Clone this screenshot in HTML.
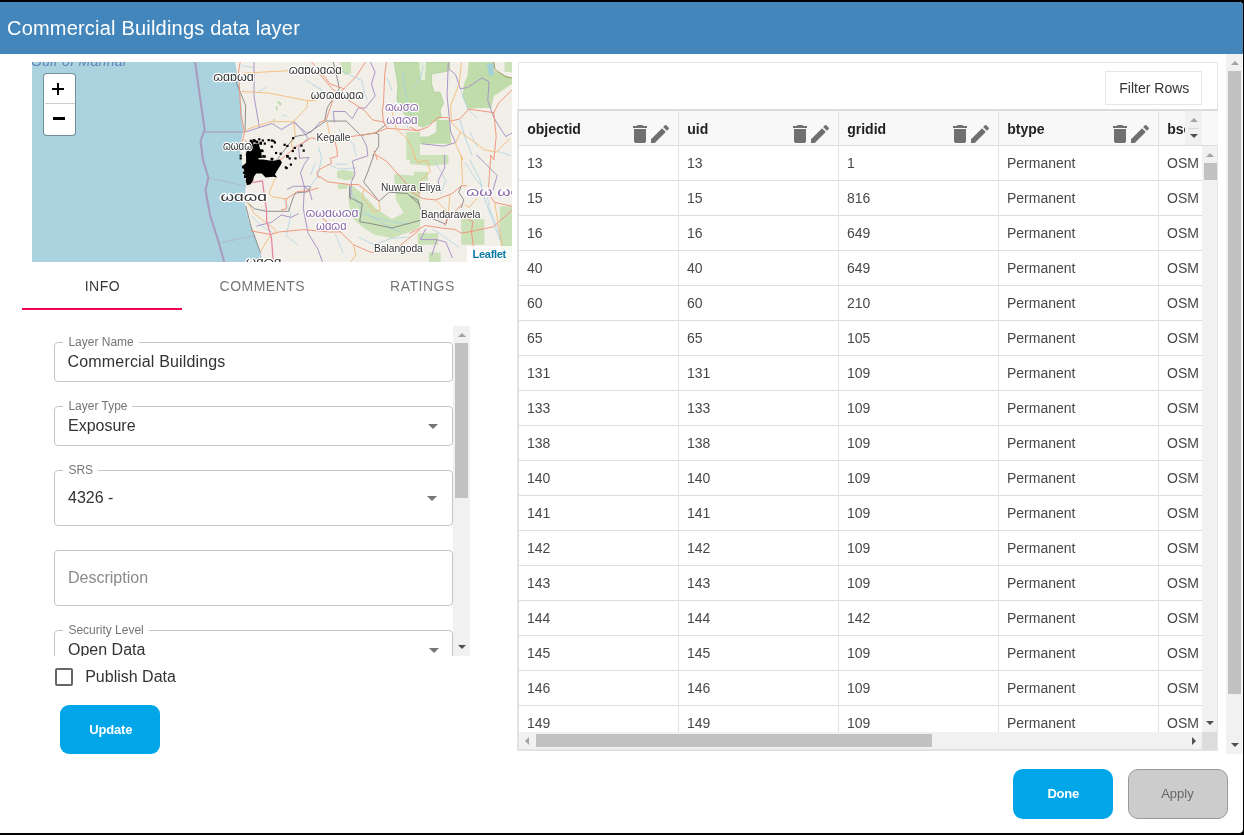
<!DOCTYPE html>
<html><head><meta charset="utf-8"><style>
*{box-sizing:border-box;margin:0;padding:0}
html,body{width:1244px;height:835px;overflow:hidden;background:#000;font-family:"Liberation Sans",sans-serif}
#dlg{position:absolute;left:0;top:2px;width:1243px;height:831px;background:#fff;border-radius:0 4px 4px 0;overflow:hidden}
#c{position:absolute;left:0;top:-2px;width:1243px;height:835px;will-change:transform}
#hdr{position:absolute;left:0;top:2px;width:1243px;height:52px;background:#4386bb;border-radius:0 4px 0 0}
#map{position:absolute;left:32px;top:62px;width:480px;height:200px;background:#aad3df;overflow:hidden}
.r{position:absolute}
.t{position:absolute;line-height:1;white-space:nowrap}
.ic{position:absolute}
.fld{position:absolute;left:54px;width:399px;border:1px solid #c4c4c4;border-radius:4px}
.arr{position:absolute;width:0;height:0;border-left:5px solid transparent;border-right:5px solid transparent;border-top:5px solid #757575}
.up{position:absolute;width:0;height:0;border-left:4px solid transparent;border-right:4px solid transparent;border-bottom:4px solid #a3a3a3}
.dn{position:absolute;width:0;height:0;border-left:4px solid transparent;border-right:4px solid transparent;border-top:4px solid #505050}
.lt{position:absolute;width:0;height:0;border-top:4px solid transparent;border-bottom:4px solid transparent;border-right:4px solid #a3a3a3}
.rt{position:absolute;width:0;height:0;border-top:4px solid transparent;border-bottom:4px solid transparent;border-left:4px solid #505050}
</style></head><body><div id="dlg"><div id="c">
<div id="hdr"></div>
<div class="t" style="left:7px;top:17.87px;font-size:20px;color:#fff;font-weight:normal;letter-spacing:.2px">Commercial Buildings data layer</div>
<div id="map"><svg width="480" height="200" viewBox="32 62 480 200" style="position:absolute;left:0;top:0;font-family:'Liberation Sans',sans-serif"><polygon points="235,61 238,80 241.5,105 243,131 240,150 243,170 246,185 244,200 248.3,219.8 255.6,239.4 261.1,255.2 263.6,263 513,263 513,61" fill="#f2efe9" /><polygon points="340.4,62 351.1,62 351.1,73.2 345,75 340.4,70" fill="#cbe1b8" /><polygon points="394,62 449.5,62 449.5,69.6 446.7,71.3 431.6,74 431.6,84 434,92.2 440,92.3 443.5,103.1 440,110.3 441.1,117.5 423.2,127.1 410,122 402,110 397,100 398,85 396,73" fill="#c0dcab" stroke="#a8d095" stroke-width="0.8"/><polygon points="419,62 426,62 425,80 421,80" fill="#e6efdc" /><polygon points="436.3,119.9 449.5,119.9 451.3,143.8 417.2,143.8 414.8,136.6 428,136.6 436.3,131.9" fill="#c0dcab" /><polygon points="406.2,131.9 420,131.9 420,160 406.2,160" fill="#cbe1b8" /><polygon points="468.7,62 493.8,62 493.8,70.8 512,78 512,84 493.8,95.9 491.4,107.9 477,107.9 467.5,109.1 462.7,95.9 463.9,84 467.5,75.6" fill="#c0dcab" /><polygon points="486.6,63.6 493.8,63.6 493.8,75.6 489,75.6" fill="#a6d1d6" /><polygon points="504.6,62 512,62 512,72 504.6,72" fill="#cbe1b8" /><polygon points="410,155 448.5,155 448.5,164 430,166 410,164" fill="#cbe1b8" /><polygon points="413.8,171.7 428,171.7 428,180.6 413.8,180.6" fill="#cbe1b8" /><polygon points="350.8,184.5 362.3,193.5 376.4,208.8 391.8,219.1 409.7,210.1 420,203.7 420,226.8 409.7,231.9 391.8,238.3 373.8,234.5 362.3,226.8 350.8,216.5 348.2,197.3" fill="#cbe1b8" /><polygon points="394,174 420,176 420,219 405,215 396,200" fill="#cbe1b8" /><polygon points="337,171 345,169.8 354.2,172 354.2,179.4 345,180 337,178" fill="#cbe1b8" /><polygon points="337.9,184.2 347.5,184.2 347.5,189 337.9,189" fill="#cbe1b8" /><polygon points="410,197.3 417.7,197.3 417.7,223 410,223" fill="#cbe1b8" /><polygon points="417.7,233.2 438.2,233.2 438.2,244.7 417.7,244.7" fill="#cbe1b8" /><polygon points="461.3,219.1 484.4,219.1 484.4,244.7 461.3,244.7" fill="#cbe1b8" /><polygon points="499.7,206.3 512,206.3 512,263 502,263 499.7,230" fill="#cbe1b8" /><polygon points="429,252.4 440.8,252.4 440.8,263 429,263" fill="#cbe1b8" /><polygon points="277,101.5 279,101 282,104 280.5,106 278.5,104" fill="#bfdcab" /><polygon points="275.5,106.5 277.5,106 277.5,111 276,110" fill="#bfdcab" /><polygon points="273,119 276,118.5 275,121 272.5,121" fill="#cde3bb" /><polyline points="313,85 322,90 330,95" fill="none" stroke="#a6d0e2" stroke-width="0.8" stroke-linejoin="round" stroke-linecap="round" /><polyline points="318.7,147.8 321.6,157.4 317.8,176.5 309.2,187" fill="none" stroke="#a6d0e2" stroke-width="0.8" stroke-linejoin="round" stroke-linecap="round" /><polyline points="336,164.1 347.5,164.1" fill="none" stroke="#a6d0e2" stroke-width="0.8" stroke-linejoin="round" stroke-linecap="round" /><polyline points="403,72 405,90 410,112 418,124" fill="none" stroke="#a6d0e2" stroke-width="0.8" stroke-linejoin="round" stroke-linecap="round" /><polyline points="460,120 466,140 472,155" fill="none" stroke="#a6d0e2" stroke-width="0.8" stroke-linejoin="round" stroke-linecap="round" /><polyline points="350,190 362,210 380,222 400,232" fill="none" stroke="#a6d0e2" stroke-width="0.8" stroke-linejoin="round" stroke-linecap="round" /><polyline points="470,160 480,180 485,200 500,240" fill="none" stroke="#a6d0e2" stroke-width="0.8" stroke-linejoin="round" stroke-linecap="round" /><polyline points="242,66 254,67.2" fill="none" stroke="#a6d0e2" stroke-width="0.7" stroke-linejoin="round" stroke-linecap="round" /><polyline points="306.6,80.4 313.8,85.1" fill="none" stroke="#a6d0e2" stroke-width="0.7" stroke-linejoin="round" stroke-linecap="round" /><polyline points="266,87.5 258.7,91.7" fill="none" stroke="#a6d0e2" stroke-width="0.7" stroke-linejoin="round" stroke-linecap="round" /><polyline points="282.7,115 286.3,116.3" fill="none" stroke="#a6d0e2" stroke-width="0.7" stroke-linejoin="round" stroke-linecap="round" /><polyline points="341.6,70.8 351.1,75.6 361.9,80.4 364.3,93.5 367.9,99.5" fill="none" stroke="#a6d0e2" stroke-width="0.7" stroke-linejoin="round" stroke-linecap="round" /><polyline points="387.1,78 391.9,90" fill="none" stroke="#a6d0e2" stroke-width="0.7" stroke-linejoin="round" stroke-linecap="round" /><polyline points="339.2,129.5 344,136.6 353.5,143.8 355.9,155.8" fill="none" stroke="#a6d0e2" stroke-width="0.7" stroke-linejoin="round" stroke-linecap="round" /><polyline points="403.8,117.5 408.6,129.5" fill="none" stroke="#a6d0e2" stroke-width="0.7" stroke-linejoin="round" stroke-linecap="round" /><polyline points="413.6,88.7 420.8,76.8 423.2,66" fill="none" stroke="#a6d0e2" stroke-width="0.7" stroke-linejoin="round" stroke-linecap="round" /><polyline points="460.3,88.7 463.9,99.5 468.7,110.3 477,117.5" fill="none" stroke="#a6d0e2" stroke-width="0.7" stroke-linejoin="round" stroke-linecap="round" /><polyline points="469.9,131.9 477,146.2" fill="none" stroke="#a6d0e2" stroke-width="0.7" stroke-linejoin="round" stroke-linecap="round" /><polyline points="497.4,151 510.6,155.8" fill="none" stroke="#a6d0e2" stroke-width="0.7" stroke-linejoin="round" stroke-linecap="round" /><polyline points="465.1,162.7 476.7,180.6 481.8,185.8" fill="none" stroke="#a6d0e2" stroke-width="0.7" stroke-linejoin="round" stroke-linecap="round" /><polyline points="486.9,193.5 489.5,208.8 497.2,226.8 502.3,244.7" fill="none" stroke="#a6d0e2" stroke-width="0.7" stroke-linejoin="round" stroke-linecap="round" /><polyline points="435.6,162.7 445.9,180.6 440.8,193.5" fill="none" stroke="#a6d0e2" stroke-width="0.7" stroke-linejoin="round" stroke-linecap="round" /><polyline points="433,229.4 448.5,239.6 458.7,247.3" fill="none" stroke="#a6d0e2" stroke-width="0.7" stroke-linejoin="round" stroke-linecap="round" /><polyline points="327.7,164 339.2,169.1 355.9,167.8" fill="none" stroke="#a6d0e2" stroke-width="0.7" stroke-linejoin="round" stroke-linecap="round" /><polyline points="353.3,211.4 371.3,216.5 391.8,221.7 409.7,224.2" fill="none" stroke="#a6d0e2" stroke-width="0.7" stroke-linejoin="round" stroke-linecap="round" /><polyline points="335.4,234.5 343.1,252.4" fill="none" stroke="#a6d0e2" stroke-width="0.7" stroke-linejoin="round" stroke-linecap="round" /><polyline points="358.5,237.1 373.8,244.7 391.8,238.3 409.7,237.1" fill="none" stroke="#a6d0e2" stroke-width="0.7" stroke-linejoin="round" stroke-linecap="round" /><polyline points="252,216.2 261.7,226 274,233.3" fill="none" stroke="#a6d0e2" stroke-width="0.7" stroke-linejoin="round" stroke-linecap="round" /><polyline points="283.7,199 291,213.7 286.2,235.7 298.4,245.5" fill="none" stroke="#a6d0e2" stroke-width="0.7" stroke-linejoin="round" stroke-linecap="round" /><polyline points="310.6,174.7 315.5,162.4" fill="none" stroke="#a6d0e2" stroke-width="0.7" stroke-linejoin="round" stroke-linecap="round" /><polyline points="195,61 199,90 204.7,130 200.5,141 203,160 208.4,177.8 205.5,190 210,215 218,240 224.5,263" fill="none" stroke="#a89bbb" stroke-width="2" stroke-linejoin="round" stroke-linecap="round" /><polyline points="204,132 244,132" fill="none" stroke="#a89bbb" stroke-width="1.2" stroke-linejoin="round" stroke-linecap="round" /><polyline points="209,178 245,186" fill="none" stroke="#b3a9c4" stroke-width="0.8" stroke-linejoin="round" stroke-linecap="round" stroke-dasharray="3 2"/><polyline points="218,243 255,236" fill="none" stroke="#b3a9c4" stroke-width="0.8" stroke-linejoin="round" stroke-linecap="round" stroke-dasharray="3 2"/><polyline points="254,62 254,96 259.3,127" fill="none" stroke="#ab95c6" stroke-width="1.0" stroke-linejoin="round" stroke-linecap="round" /><polyline points="245.6,131.9 271.9,123.5 281.5,129.5 293.5,122.3 306.6,133 311.4,131.9 320,122.3" fill="none" stroke="#ab95c6" stroke-width="1.0" stroke-linejoin="round" stroke-linecap="round" /><polyline points="294.8,121.9 304.4,133.4 308.2,138.2 298.6,147.8 299.6,158.3 309.2,157.4 304.4,164.1 300.5,172.7 304.4,187 309.2,189.9 312,200" fill="none" stroke="#ab95c6" stroke-width="1.0" stroke-linejoin="round" stroke-linecap="round" /><polyline points="304.4,187 303.3,208.8 308.1,233.3 317.9,249.1 322.8,263" fill="none" stroke="#ab95c6" stroke-width="1.0" stroke-linejoin="round" stroke-linecap="round" /><polyline points="287.4,189.3 293.5,186.3 309.4,186.3" fill="none" stroke="#ab95c6" stroke-width="1.0" stroke-linejoin="round" stroke-linecap="round" /><polyline points="256.9,225.9 271.5,222.3 281.3,214.9 291,217.4 298.4,213.7" fill="none" stroke="#ab95c6" stroke-width="1.0" stroke-linejoin="round" stroke-linecap="round" /><polyline points="370.3,62 375.1,72 371.5,84 375.1,95.9 365.5,107.9 358.3,107.9 352.3,118.7 345.1,111.5 333.2,111.5 334.4,122.3" fill="none" stroke="#ab95c6" stroke-width="1.0" stroke-linejoin="round" stroke-linecap="round" /><polyline points="361.9,136.6 366.7,146.2 367.9,155.8 360,158.3 352.3,161.2 355.1,173.6 351.3,182.3 350.3,200" fill="none" stroke="#ab95c6" stroke-width="1.0" stroke-linejoin="round" stroke-linecap="round" /><polyline points="448.3,62 447.1,95.9 450.7,131.9 455.5,142.6 443.5,146.2 422,143.8" fill="none" stroke="#ab95c6" stroke-width="1.0" stroke-linejoin="round" stroke-linecap="round" /><polyline points="449.5,69.6 455.5,74.4 460.3,88.7 467.5,87.5 481.9,78 489,81.6 487.8,100.7 493.8,117.5 501,129.5 505.8,136.6 512,133" fill="none" stroke="#ab95c6" stroke-width="1.0" stroke-linejoin="round" stroke-linecap="round" /><polyline points="444.6,155 444.6,167.8 438.2,180.6 439.5,190.9" fill="none" stroke="#ab95c6" stroke-width="1.0" stroke-linejoin="round" stroke-linecap="round" /><polyline points="476.7,155 486.9,165.3 497.2,175.5 492,193.5" fill="none" stroke="#ab95c6" stroke-width="1.0" stroke-linejoin="round" stroke-linecap="round" /><polyline points="425.4,229.4 420.3,239.6 436.9,239.6 431.8,255" fill="none" stroke="#ab95c6" stroke-width="1.0" stroke-linejoin="round" stroke-linecap="round" /><polyline points="436.9,239.6 445.9,242.2 452.3,257.6" fill="none" stroke="#ab95c6" stroke-width="1.0" stroke-linejoin="round" stroke-linecap="round" /><polyline points="493.8,62 495,69.6 505.8,76.8 512,78" fill="none" stroke="#a39a5a" stroke-width="1" stroke-linejoin="round" stroke-linecap="round" /><polyline points="236,81.6 245.6,105.5 245,131.9" fill="none" stroke="#858585" stroke-width="0.9" stroke-linejoin="round" stroke-linecap="round" /><polyline points="276.7,160 294.7,136.6 306.6,134.3 325.8,121 346.3,121.1 360.7,135.4 375.1,133 385.9,124.7" fill="none" stroke="#858585" stroke-width="0.9" stroke-linejoin="round" stroke-linecap="round" /><polyline points="333.2,62 338,81.6 339.2,88.7 327.2,107.9 324.8,119.9" fill="none" stroke="#858585" stroke-width="0.9" stroke-linejoin="round" stroke-linecap="round" /><polyline points="375.1,133 378.7,134.3 378.7,146.2 372.7,155.8 373.8,155 367.4,173 363.6,181.9 379,201.2 389.2,192.2 407.2,193.5 420,205" fill="none" stroke="#858585" stroke-width="0.9" stroke-linejoin="round" stroke-linecap="round" /><polyline points="349.5,185.8 349.5,197.3 362.3,203.7 359.7,221.7 373.8,224.2 391.8,228 420,220.4" fill="none" stroke="#858585" stroke-width="0.9" stroke-linejoin="round" stroke-linecap="round" /><polyline points="244.7,200.3 254.4,208.8 266.6,211.3 288.6,211.3 293.5,196.6 295.9,193 308.1,191.7 310.6,186.9" fill="none" stroke="#858585" stroke-width="0.9" stroke-linejoin="round" stroke-linecap="round" /><polyline points="245.9,206.4 250.8,225.9 260.5,252.8" fill="none" stroke="#858585" stroke-width="0.9" stroke-linejoin="round" stroke-linecap="round" /><polyline points="410,196 417.7,199.9 420.3,208.8 430.5,217.8 445.9,224.2 447.2,219.1" fill="none" stroke="#858585" stroke-width="0.9" stroke-linejoin="round" stroke-linecap="round" /><polyline points="461.3,185.8 458.7,192.2 463.8,199.9 461.3,207.6" fill="none" stroke="#858585" stroke-width="0.9" stroke-linejoin="round" stroke-linecap="round" /><polyline points="240.2,62 238.4,72 239.6,90 240.8,113.9 244.4,131.9 242,143.8" fill="none" stroke="#ef9479" stroke-width="0.95" stroke-linejoin="round" stroke-linecap="round" /><polyline points="311.4,62 321,72 330,84 343.9,88.7" fill="none" stroke="#ef9479" stroke-width="0.95" stroke-linejoin="round" stroke-linecap="round" /><polyline points="280.3,160 297,146.2 311.4,137.8 316.2,139 330,136.6 351.1,136.6 375.1,133 387.1,128.3 403.8,129.5 420,130.7" fill="none" stroke="#ef9479" stroke-width="0.95" stroke-linejoin="round" stroke-linecap="round" /><polyline points="365.5,62 355.9,76.8 343.9,88.7 333.2,99.5 326,119.9 320,122.3" fill="none" stroke="#ef9479" stroke-width="0.95" stroke-linejoin="round" stroke-linecap="round" /><polyline points="320,74.4 332,88.7 347.5,99.5 364.3,110.3 372.7,119.9 384.7,122.3" fill="none" stroke="#ef9479" stroke-width="0.95" stroke-linejoin="round" stroke-linecap="round" /><polyline points="386.5,62 384.7,74.4 383.5,103.1 382.3,110.3 383.5,122.3 387.1,128.3" fill="none" stroke="#ef9479" stroke-width="0.95" stroke-linejoin="round" stroke-linecap="round" /><polyline points="335,141.1 336.9,149.7 337.4,156.4 330.2,158.3 331.7,163.1 318.7,169.8 316.8,173.6 318.7,177.5 320,176.8" fill="none" stroke="#ef9479" stroke-width="0.95" stroke-linejoin="round" stroke-linecap="round" /><polyline points="373.9,151 377.5,160" fill="none" stroke="#ef9479" stroke-width="0.95" stroke-linejoin="round" stroke-linecap="round" /><polyline points="317.9,188.1 309.4,190.5 297.2,191.7 286.2,199 286.2,208.8 281.3,210" fill="none" stroke="#ef9479" stroke-width="0.95" stroke-linejoin="round" stroke-linecap="round" /><polyline points="250.8,230.8 270.3,234.5 278.8,232 303.3,229.6 330,232 340.5,231.9 320,216.5" fill="none" stroke="#ef9479" stroke-width="0.95" stroke-linejoin="round" stroke-linecap="round" /><polyline points="320,176.8 327.7,181.9 349.5,184.5 358.5,184.5 379,201.2" fill="none" stroke="#ef9479" stroke-width="0.95" stroke-linejoin="round" stroke-linecap="round" /><polyline points="376.4,155 386.7,161.4 396.9,173 407.2,184.5 420,193.5" fill="none" stroke="#ef9479" stroke-width="0.95" stroke-linejoin="round" stroke-linecap="round" /><polyline points="340.5,231.9 353.3,244.7 371.3,252.4 391.8,252.4 420,229.4" fill="none" stroke="#ef9479" stroke-width="0.95" stroke-linejoin="round" stroke-linecap="round" /><polyline points="410,127.1 417.2,130.7 428,127.1 437.5,117.5 447.1,117.5 451.3,121.1 460.3,118.7 468.7,109.1 477,110.3 493.8,112.7 498.6,103.1 512,89.9" fill="none" stroke="#ef9479" stroke-width="0.95" stroke-linejoin="round" stroke-linecap="round" /><polyline points="493.8,112.7 496.2,136.6 493.8,160 490.8,155 489.5,174.2 488.2,193.5 494.6,202.4 512,206.3" fill="none" stroke="#ef9479" stroke-width="0.95" stroke-linejoin="round" stroke-linecap="round" /><polyline points="410,190.9 422.8,198.6 435.6,199.9 452.3,193.5 461.3,185.8 466.4,185.8" fill="none" stroke="#ef9479" stroke-width="0.95" stroke-linejoin="round" stroke-linecap="round" /><polyline points="410,233.2 425.4,225.5 442.1,228.1 454.9,229.4 461.3,233.2 469,231.9 493.3,226.8 512,210.1" fill="none" stroke="#ef9479" stroke-width="0.95" stroke-linejoin="round" stroke-linecap="round" /><polyline points="462.6,203.7 447.2,219.1 444.6,225.5" fill="none" stroke="#ef9479" stroke-width="0.95" stroke-linejoin="round" stroke-linecap="round" /><polyline points="466.4,217.8 472.8,221.7 471.5,231.9 475.4,263" fill="none" stroke="#ef9479" stroke-width="0.95" stroke-linejoin="round" stroke-linecap="round" /><polyline points="245,140 258,160" fill="none" stroke="#ef9479" stroke-width="0.95" stroke-linejoin="round" stroke-linecap="round" /><polyline points="242,73.2 287.5,70.8" fill="none" stroke="#f3bb78" stroke-width="0.9" stroke-linejoin="round" stroke-linecap="round" /><polyline points="242,91.5 268.3,93 307.8,100.7 316.2,100.7" fill="none" stroke="#f3bb78" stroke-width="0.9" stroke-linejoin="round" stroke-linecap="round" /><polyline points="307.8,100.7 306.6,108 293.5,121.7 270.7,121.7 248,128.9 245,131.9" fill="none" stroke="#f3bb78" stroke-width="0.9" stroke-linejoin="round" stroke-linecap="round" /><polyline points="293.5,121.7 295.3,134.3 291.1,143.8 293.5,151" fill="none" stroke="#f3bb78" stroke-width="0.9" stroke-linejoin="round" stroke-linecap="round" /><polyline points="327.2,122.3 329.6,134.3" fill="none" stroke="#f3bb78" stroke-width="0.9" stroke-linejoin="round" stroke-linecap="round" /><polyline points="391.9,111.5 396.6,129.5 406.2,137.8 411,146.2 415.8,160" fill="none" stroke="#f3bb78" stroke-width="0.9" stroke-linejoin="round" stroke-linecap="round" /><polyline points="461.5,62 459.1,84 450.7,105.5 451.3,122.3 460.3,131.9 477,143.8 484.3,149.8 496.2,152.2 509.4,139" fill="none" stroke="#f3bb78" stroke-width="0.9" stroke-linejoin="round" stroke-linecap="round" /><polyline points="460.3,131.9 455.5,143.8 462.7,160 461.3,155 462.6,183.2" fill="none" stroke="#f3bb78" stroke-width="0.9" stroke-linejoin="round" stroke-linecap="round" /><polyline points="275.2,178.3 269,193 271.5,196.6 287.4,199" fill="none" stroke="#f3bb78" stroke-width="0.9" stroke-linejoin="round" stroke-linecap="round" /><polyline points="247.1,201.5 254.4,213.7 265.4,222.3 274,228.4 276.4,233.3" fill="none" stroke="#f3bb78" stroke-width="0.9" stroke-linejoin="round" stroke-linecap="round" /><polyline points="270.3,235.7 261.1,250.4" fill="none" stroke="#f3bb78" stroke-width="0.9" stroke-linejoin="round" stroke-linecap="round" /><polyline points="363.6,189.6 362.3,197.3 373.8,211.4 380.3,210.1 379,202.4" fill="none" stroke="#f3bb78" stroke-width="0.9" stroke-linejoin="round" stroke-linecap="round" /><polyline points="435.6,199.9 448.5,212.7 449.7,196" fill="none" stroke="#f3bb78" stroke-width="0.9" stroke-linejoin="round" stroke-linecap="round" /><polyline points="465.1,205 469,207.6 476.7,198.6" fill="none" stroke="#f3bb78" stroke-width="0.9" stroke-linejoin="round" stroke-linecap="round" /><polyline points="494.6,202.4 499.7,231.9 502.3,247.3" fill="none" stroke="#f3bb78" stroke-width="0.9" stroke-linejoin="round" stroke-linecap="round" /><polyline points="413.8,155 417.7,162.7 426.7,160.1 430.5,171.7 420.3,180.6" fill="none" stroke="#f3bb78" stroke-width="0.9" stroke-linejoin="round" stroke-linecap="round" /><polyline points="353.3,244.7 356,255 350,263" fill="none" stroke="#f3bb78" stroke-width="0.9" stroke-linejoin="round" stroke-linecap="round" /><polyline points="249,183 262.4,180.8 266.6,211.3 266.6,221 271.5,238.1 273.3,263" fill="none" stroke="#e3819a" stroke-width="1.2" stroke-linejoin="round" stroke-linecap="round" /><polygon points="246.9,150.2 251.6,149.5 257.8,153.3 258.6,159.6 263.2,159.6 269.5,160.4 273.4,161.1 279.6,159.6 281.9,161.9 281.1,164.2 277.2,170.5 274.9,174.4 277.2,177.5 273.4,176.7 265.6,177.5 261.7,173.6 256.2,173.6 253.9,176.7 253.1,180.6 250.8,183.7 246.9,185.3 245.7,180.6 246.1,176.7 243.8,169.7 243.0,165.8 246.1,162.7 246.1,153.3" fill="#000" /><polygon points="248,147 253,144.5 257,145.5 261,150 262,158 250,158" fill="#000" /><rect x="249.7" y="139.7" width="2.6" height="2.6" fill="#000"/><rect x="252.7" y="139.2" width="2.6" height="2.6" fill="#000"/><rect x="255.7" y="140.7" width="2.6" height="2.6" fill="#000"/><rect x="250.7" y="142.7" width="2.6" height="2.6" fill="#000"/><rect x="253.7" y="143.7" width="2.6" height="2.6" fill="#000"/><rect x="256.7" y="144.7" width="2.6" height="2.6" fill="#000"/><rect x="249.7" y="146.2" width="2.6" height="2.6" fill="#000"/><rect x="252.7" y="147.2" width="2.6" height="2.6" fill="#000"/><rect x="255.7" y="148.2" width="2.6" height="2.6" fill="#000"/><rect x="247.7" y="148.7" width="2.6" height="2.6" fill="#000"/><rect x="251.7" y="150.2" width="2.6" height="2.6" fill="#000"/><rect x="250.7" y="140.7" width="2.6" height="2.6" fill="#000"/><rect x="253.6" y="139.79999999999998" width="2.6" height="2.6" fill="#000"/><rect x="256.5" y="143.6" width="2.6" height="2.6" fill="#000"/><rect x="259.4" y="141.7" width="2.6" height="2.6" fill="#000"/><rect x="257.4" y="147.39999999999998" width="2.6" height="2.6" fill="#000"/><rect x="260.3" y="149.39999999999998" width="2.6" height="2.6" fill="#000"/><rect x="251.7" y="147.39999999999998" width="2.6" height="2.6" fill="#000"/><rect x="247.89999999999998" y="150.29999999999998" width="2.6" height="2.6" fill="#000"/><rect x="245.89999999999998" y="153.2" width="2.6" height="2.6" fill="#000"/><rect x="262.2" y="155.1" width="2.6" height="2.6" fill="#000"/><rect x="270.8" y="158.0" width="2.6" height="2.6" fill="#000"/><rect x="242.1" y="165.6" width="2.6" height="2.6" fill="#000"/><rect x="243.1" y="171.39999999999998" width="2.6" height="2.6" fill="#000"/><rect x="244.0" y="175.2" width="2.6" height="2.6" fill="#000"/><rect x="245.89999999999998" y="180.0" width="2.6" height="2.6" fill="#000"/><rect x="247.89999999999998" y="181.89999999999998" width="2.6" height="2.6" fill="#000"/><rect x="286.2" y="155.1" width="2.6" height="2.6" fill="#000"/><rect x="277.59999999999997" y="159.89999999999998" width="2.6" height="2.6" fill="#000"/><rect x="273.7" y="160.79999999999998" width="2.6" height="2.6" fill="#000"/><rect x="258.2" y="138.2" width="2.2" height="2.2" fill="#000"/><rect x="261.7" y="139.4" width="2.2" height="2.2" fill="#000"/><rect x="263.7" y="142.5" width="2.2" height="2.2" fill="#000"/><rect x="267.6" y="139.0" width="2.2" height="2.2" fill="#000"/><rect x="270.7" y="139.4" width="2.2" height="2.2" fill="#000"/><rect x="273.8" y="141.4" width="2.2" height="2.2" fill="#000"/><rect x="270.7" y="145.6" width="2.2" height="2.2" fill="#000"/><rect x="259.8" y="142.5" width="2.2" height="2.2" fill="#000"/><rect x="260.6" y="149.9" width="2.2" height="2.2" fill="#000"/><rect x="263.7" y="155.4" width="2.2" height="2.2" fill="#000"/><rect x="270.7" y="157.7" width="2.2" height="2.2" fill="#000"/><rect x="275.0" y="151.9" width="2.2" height="2.2" fill="#000"/><rect x="279.6" y="152.6" width="2.2" height="2.2" fill="#000"/><rect x="283.5" y="143.7" width="2.2" height="2.2" fill="#000"/><rect x="286.3" y="144.9" width="2.2" height="2.2" fill="#000"/><rect x="292.1" y="137.1" width="2.2" height="2.2" fill="#000"/><rect x="293.7" y="146.8" width="2.2" height="2.2" fill="#000"/><rect x="291.7" y="149.9" width="2.2" height="2.2" fill="#000"/><rect x="286.3" y="155.0" width="2.2" height="2.2" fill="#000"/><rect x="288.6" y="157.3" width="2.2" height="2.2" fill="#000"/><rect x="294.4" y="157.3" width="2.2" height="2.2" fill="#000"/><rect x="300.3" y="144.5" width="2.2" height="2.2" fill="#000"/><rect x="302.6" y="149.5" width="2.2" height="2.2" fill="#000"/><rect x="289.8" y="163.5" width="2.2" height="2.2" fill="#000"/><rect x="284.7" y="166.3" width="2.2" height="2.2" fill="#000"/><rect x="239.6" y="154.6" width="2.2" height="2.2" fill="#000"/><rect x="239.6" y="157.3" width="2.2" height="2.2" fill="#000"/><rect x="244.2" y="172.5" width="2.2" height="2.2" fill="#000"/><rect x="244.2" y="175.6" width="2.2" height="2.2" fill="#000"/><rect x="242.7" y="166.3" width="2.2" height="2.2" fill="#000"/><rect x="252.8" y="139.8" width="2.2" height="2.2" fill="#000"/><rect x="255.9" y="144.5" width="2.2" height="2.2" fill="#000"/><rect x="257.1" y="146.8" width="2.2" height="2.2" fill="#000"/><rect x="250.5" y="146.0" width="2.2" height="2.2" fill="#000"/><rect x="261.4" y="149.9" width="2.2" height="2.2" fill="#000"/><rect x="272.3" y="139.8" width="2.2" height="2.2" fill="#000"/><rect x="285.5" y="167.0" width="2.2" height="2.2" fill="#000"/><rect x="278.5" y="161.6" width="2.2" height="2.2" fill="#000"/><text x="381" y="190.5" font-size="10.2" fill="#333" stroke="#fff" stroke-width="2.2" stroke-linejoin="round" paint-order="stroke" style="letter-spacing:0px">Nuwara Eliya</text><text x="421" y="217.5" font-size="10.2" fill="#333" stroke="#fff" stroke-width="2.2" stroke-linejoin="round" paint-order="stroke" style="letter-spacing:0px">Bandarawela</text><text x="374" y="251.5" font-size="10.2" fill="#333" stroke="#fff" stroke-width="2.2" stroke-linejoin="round" paint-order="stroke" style="letter-spacing:0px">Balangoda</text><text x="316.5" y="140.5" font-size="10.2" fill="#333" stroke="#fff" stroke-width="2.2" stroke-linejoin="round" paint-order="stroke" style="letter-spacing:0px">Kegalle</text><text x="213.3" y="81" font-size="12.5" fill="#333" stroke="#fff" stroke-width="2.4" stroke-linejoin="round" paint-order="stroke" textLength="40.39999999999998" lengthAdjust="spacingAndGlyphs">ɷɑɒωɑ</text><text x="288.7" y="74" font-size="12" fill="#333" stroke="#fff" stroke-width="2.4" stroke-linejoin="round" paint-order="stroke" textLength="53.0" lengthAdjust="spacingAndGlyphs">ɷɑɒωɑɷɑ</text><text x="310.7" y="98.5" font-size="12" fill="#333" stroke="#fff" stroke-width="2.4" stroke-linejoin="round" paint-order="stroke" textLength="53.0" lengthAdjust="spacingAndGlyphs">ωσɷɑωɑɷ</text><text x="385" y="110.5" font-size="12" fill="#8a68a8" stroke="#fff" stroke-width="2.4" stroke-linejoin="round" paint-order="stroke" textLength="33.60000000000002" lengthAdjust="spacingAndGlyphs">ɷωσɷ</text><text x="386.3" y="124" font-size="12" fill="#8a68a8" stroke="#fff" stroke-width="2.4" stroke-linejoin="round" paint-order="stroke" textLength="31.30000000000001" lengthAdjust="spacingAndGlyphs">ωɑɷɑ</text><text x="223" y="149.5" font-size="12.5" fill="#333" stroke="#fff" stroke-width="2.4" stroke-linejoin="round" paint-order="stroke" textLength="29" lengthAdjust="spacingAndGlyphs">ɷωɑɷ</text><text x="220.5" y="200.5" font-size="13" fill="#333" stroke="#fff" stroke-width="2.4" stroke-linejoin="round" paint-order="stroke" textLength="46.5" lengthAdjust="spacingAndGlyphs">ωɑɷɑ</text><text x="305.4" y="217" font-size="12" fill="#8a68a8" stroke="#fff" stroke-width="2.4" stroke-linejoin="round" paint-order="stroke" textLength="53.0" lengthAdjust="spacingAndGlyphs">ɷωɑωɷɑ</text><text x="316" y="230" font-size="12" fill="#8a68a8" stroke="#fff" stroke-width="2.4" stroke-linejoin="round" paint-order="stroke" textLength="30.5" lengthAdjust="spacingAndGlyphs">ωɑɷɑ</text><text x="465.9" y="195.5" font-size="12.5" fill="#8a68a8" stroke="#fff" stroke-width="2.4" stroke-linejoin="round" paint-order="stroke" textLength="54.10000000000002" lengthAdjust="spacingAndGlyphs">ɷω ωɑ</text><text x="245.7" y="266" font-size="12" fill="#333" stroke="#fff" stroke-width="2.4" stroke-linejoin="round" paint-order="stroke" textLength="35.80000000000001" lengthAdjust="spacingAndGlyphs">ωɑɷɑ</text><text x="31" y="66.3" font-size="14" fill="#5f86b8"  style="font-style:italic;letter-spacing:0.3px">Gulf of Mannar</text></svg><div style="position:absolute;left:11px;top:10.5px;width:32.5px;height:63px;border:1.6px solid rgba(0,0,0,.32);border-radius:4px;background:#fff;background-clip:padding-box"></div><div style="position:absolute;left:12.5px;top:41px;width:30px;height:1px;background:#ccc"></div><div style="position:absolute;left:20px;top:26px;width:12px;height:2px;background:#000"></div><div style="position:absolute;left:25px;top:21px;width:2px;height:12px;background:#000"></div><div style="position:absolute;left:21px;top:55.4px;width:12px;height:3px;background:#000"></div><div style="position:absolute;left:435px;top:184px;width:45px;height:16px;background:rgba(255,255,255,.8)"></div><div style="position:absolute;left:440.6px;top:187.1px;font-size:11px;line-height:1;color:#0a7aa8;font-weight:bold;letter-spacing:-.3px;font-family:'Liberation Sans',sans-serif">Leaflet</div></div>
<div class="t" style="left:22.15px;width:160px;text-align:center;top:279.15px;font-size:14px;color:rgba(0,0,0,.8);letter-spacing:.5px;padding-left:.5px">INFO</div>
<div class="t" style="left:182.15px;width:160px;text-align:center;top:279.15px;font-size:14px;color:rgba(0,0,0,.56);letter-spacing:.5px;padding-left:.5px">COMMENTS</div>
<div class="t" style="left:342.15px;width:160px;text-align:center;top:279.15px;font-size:14px;color:rgba(0,0,0,.56);letter-spacing:.5px;padding-left:.5px">RATINGS</div>
<div class="r" style="left:22px;top:308px;width:160px;height:2px;background:#f50057"></div>
<div class="r" style="left:0;top:326px;width:470px;height:330px;overflow:hidden"><div class="fld" style="top:16px;height:40px"></div><div class="t" style="left:63.2px;top:11px;font-size:12px;color:#757575;background:#fff;padding:0 5px;height:10px;line-height:10px;color:transparent">Layer Name</div><div class="t" style="left:68.4px;top:9.74px;font-size:12px;color:#757575;">Layer Name</div><div class="t" style="left:67.6px;top:28.16px;font-size:16px;color:#333;letter-spacing:.16px">Commercial Buildings</div><div class="fld" style="top:80px;height:40px"></div><div class="t" style="left:63.2px;top:75px;font-size:12px;color:#757575;background:#fff;padding:0 5px;height:10px;line-height:10px;color:transparent">Layer Type</div><div class="t" style="left:68.4px;top:73.84px;font-size:12px;color:#757575;">Layer Type</div><div class="t" style="left:68px;top:92.16px;font-size:16px;color:#333;">Exposure</div><div class="arr" style="left:428px;top:98px;border-top-color:#757575"></div><div class="fld" style="top:144px;height:56px"></div><div class="t" style="left:63.2px;top:139px;font-size:12px;color:#757575;background:#fff;padding:0 5px;height:10px;line-height:10px;color:transparent">SRS</div><div class="t" style="left:68.4px;top:137.64px;font-size:12px;color:#757575;">SRS</div><div class="t" style="left:68px;top:164.16px;font-size:16px;color:#333;">4326 -</div><div class="arr" style="left:427px;top:170px;border-top-color:#757575"></div><div class="fld" style="top:224px;height:56px"></div><div class="t" style="left:68px;top:244.26px;font-size:16px;color:#8a8a8a;">Description</div><div class="fld" style="top:304px;height:55px"></div><div class="t" style="left:63.2px;top:299px;font-size:12px;color:#757575;background:#fff;padding:0 5px;height:10px;line-height:10px;color:transparent">Security Level</div><div class="t" style="left:68.4px;top:297.84px;font-size:12px;color:#757575;">Security Level</div><div class="t" style="left:68px;top:316.16px;font-size:16px;color:#333;">Open Data</div><div class="arr" style="left:429px;top:322px;border-top-color:#757575"></div><div class="r" style="left:453px;top:0;width:17px;height:330px;background:#f1f1f1"></div><div class="r" style="left:455px;top:17px;width:13px;height:155px;background:#c1c1c1"></div><div class="up" style="left:457.5px;top:7px"></div><div class="dn" style="left:457.5px;top:319px"></div></div>
<div class="r" style="left:55px;top:668px;width:18px;height:18px;border:2px solid #666;border-radius:2px"></div>
<div class="t" style="left:85.2px;top:668.96px;font-size:16px;color:#333;font-weight:normal;">Publish Data</div>
<div class="r" style="left:60px;top:705px;width:100px;height:49px;background:#00a6e8;border-radius:9px"></div>
<div class="t" style="left:89.2px;top:722.90px;font-size:13px;color:#fff;font-weight:bold;letter-spacing:-.15px">Update</div>
<div class="r" style="left:518px;top:62px;width:700px;height:689px;border:1px solid #e3e6ea"></div>
<div class="r" style="left:1105px;top:71px;width:97px;height:34px;border:1px solid #e3e6ea"></div>
<div class="t" style="left:1119.3px;top:81.05px;font-size:14px;color:#333;font-weight:normal;">Filter Rows</div>
<div class="r" style="left:517px;top:109px;width:701px;height:642px;overflow:hidden;border-left:2px solid #dfe3e8;border-top:2px solid #dcdcdc;border-bottom:2px solid #dfe3e8"><div class="r" style="left:-2px;top:-2px;width:701px;height:642px"><div class="r" style="left:0;top:0;width:700px;height:36px;background:#f8f8f8"></div><div class="r" style="left:161px;top:0;width:1px;height:623px;background:#e2e2e2"></div><div class="t" style="left:10.200000000000045px;top:13.05px;font-size:14px;font-weight:bold;color:#222">objectid</div><svg class="ic" style="left:111px;top:13px" width="24" height="24" viewBox="0 0 24 24"><path fill="#707070" d="M6 19c0 1.1.9 2 2 2h8c1.1 0 2-.9 2-2V7H6v12zM19 4h-3.5l-1-1h-5l-1 1H5v2h14V4z"/></svg><svg class="ic" style="left:131px;top:13px" width="24" height="24" viewBox="0 0 24 24"><path fill="#707070" d="M3 17.25V21h3.75L17.81 9.94l-3.75-3.75L3 17.25zM20.71 7.04c.39-.39.39-1.02 0-1.41l-2.34-2.34c-.39-.39-1.02-.39-1.41 0l-1.83 1.83 3.75 3.75 1.83-1.83z"/></svg><div class="r" style="left:321px;top:0;width:1px;height:623px;background:#e2e2e2"></div><div class="t" style="left:170.20000000000005px;top:13.05px;font-size:14px;font-weight:bold;color:#222">uid</div><svg class="ic" style="left:271px;top:13px" width="24" height="24" viewBox="0 0 24 24"><path fill="#707070" d="M6 19c0 1.1.9 2 2 2h8c1.1 0 2-.9 2-2V7H6v12zM19 4h-3.5l-1-1h-5l-1 1H5v2h14V4z"/></svg><svg class="ic" style="left:291px;top:13px" width="24" height="24" viewBox="0 0 24 24"><path fill="#707070" d="M3 17.25V21h3.75L17.81 9.94l-3.75-3.75L3 17.25zM20.71 7.04c.39-.39.39-1.02 0-1.41l-2.34-2.34c-.39-.39-1.02-.39-1.41 0l-1.83 1.83 3.75 3.75 1.83-1.83z"/></svg><div class="r" style="left:481px;top:0;width:1px;height:623px;background:#e2e2e2"></div><div class="t" style="left:330.20000000000005px;top:13.05px;font-size:14px;font-weight:bold;color:#222">gridid</div><svg class="ic" style="left:431px;top:13px" width="24" height="24" viewBox="0 0 24 24"><path fill="#707070" d="M6 19c0 1.1.9 2 2 2h8c1.1 0 2-.9 2-2V7H6v12zM19 4h-3.5l-1-1h-5l-1 1H5v2h14V4z"/></svg><svg class="ic" style="left:451px;top:13px" width="24" height="24" viewBox="0 0 24 24"><path fill="#707070" d="M3 17.25V21h3.75L17.81 9.94l-3.75-3.75L3 17.25zM20.71 7.04c.39-.39.39-1.02 0-1.41l-2.34-2.34c-.39-.39-1.02-.39-1.41 0l-1.83 1.83 3.75 3.75 1.83-1.83z"/></svg><div class="r" style="left:641px;top:0;width:1px;height:623px;background:#e2e2e2"></div><div class="t" style="left:490.20000000000005px;top:13.05px;font-size:14px;font-weight:bold;color:#222">btype</div><svg class="ic" style="left:591px;top:13px" width="24" height="24" viewBox="0 0 24 24"><path fill="#707070" d="M6 19c0 1.1.9 2 2 2h8c1.1 0 2-.9 2-2V7H6v12zM19 4h-3.5l-1-1h-5l-1 1H5v2h14V4z"/></svg><svg class="ic" style="left:611px;top:13px" width="24" height="24" viewBox="0 0 24 24"><path fill="#707070" d="M3 17.25V21h3.75L17.81 9.94l-3.75-3.75L3 17.25zM20.71 7.04c.39-.39.39-1.02 0-1.41l-2.34-2.34c-.39-.39-1.02-.39-1.41 0l-1.83 1.83 3.75 3.75 1.83-1.83z"/></svg><div class="r" style="left:801px;top:0;width:1px;height:623px;background:#e2e2e2"></div><div class="t" style="left:650.2px;top:13.05px;font-size:14px;font-weight:bold;color:#222">bsource</div><div class="r" style="left:0;top:36px;width:700px;height:1px;background:#ddd"></div><div class="r" style="left:0;top:71px;width:700px;height:1px;background:#ddd"></div><div class="t" style="left:10px;top:46.95px;font-size:14px;color:#484848">13</div><div class="t" style="left:170px;top:46.95px;font-size:14px;color:#484848">13</div><div class="t" style="left:330px;top:46.95px;font-size:14px;color:#484848">1</div><div class="t" style="left:490px;top:46.95px;font-size:14px;color:#484848">Permanent</div><div class="t" style="left:650px;top:46.95px;font-size:14px;color:#484848">OSM</div><div class="r" style="left:0;top:106px;width:700px;height:1px;background:#ddd"></div><div class="t" style="left:10px;top:81.95px;font-size:14px;color:#484848">15</div><div class="t" style="left:170px;top:81.95px;font-size:14px;color:#484848">15</div><div class="t" style="left:330px;top:81.95px;font-size:14px;color:#484848">816</div><div class="t" style="left:490px;top:81.95px;font-size:14px;color:#484848">Permanent</div><div class="t" style="left:650px;top:81.95px;font-size:14px;color:#484848">OSM</div><div class="r" style="left:0;top:141px;width:700px;height:1px;background:#ddd"></div><div class="t" style="left:10px;top:116.95px;font-size:14px;color:#484848">16</div><div class="t" style="left:170px;top:116.95px;font-size:14px;color:#484848">16</div><div class="t" style="left:330px;top:116.95px;font-size:14px;color:#484848">649</div><div class="t" style="left:490px;top:116.95px;font-size:14px;color:#484848">Permanent</div><div class="t" style="left:650px;top:116.95px;font-size:14px;color:#484848">OSM</div><div class="r" style="left:0;top:176px;width:700px;height:1px;background:#ddd"></div><div class="t" style="left:10px;top:151.95px;font-size:14px;color:#484848">40</div><div class="t" style="left:170px;top:151.95px;font-size:14px;color:#484848">40</div><div class="t" style="left:330px;top:151.95px;font-size:14px;color:#484848">649</div><div class="t" style="left:490px;top:151.95px;font-size:14px;color:#484848">Permanent</div><div class="t" style="left:650px;top:151.95px;font-size:14px;color:#484848">OSM</div><div class="r" style="left:0;top:211px;width:700px;height:1px;background:#ddd"></div><div class="t" style="left:10px;top:186.95px;font-size:14px;color:#484848">60</div><div class="t" style="left:170px;top:186.95px;font-size:14px;color:#484848">60</div><div class="t" style="left:330px;top:186.95px;font-size:14px;color:#484848">210</div><div class="t" style="left:490px;top:186.95px;font-size:14px;color:#484848">Permanent</div><div class="t" style="left:650px;top:186.95px;font-size:14px;color:#484848">OSM</div><div class="r" style="left:0;top:246px;width:700px;height:1px;background:#ddd"></div><div class="t" style="left:10px;top:221.95px;font-size:14px;color:#484848">65</div><div class="t" style="left:170px;top:221.95px;font-size:14px;color:#484848">65</div><div class="t" style="left:330px;top:221.95px;font-size:14px;color:#484848">105</div><div class="t" style="left:490px;top:221.95px;font-size:14px;color:#484848">Permanent</div><div class="t" style="left:650px;top:221.95px;font-size:14px;color:#484848">OSM</div><div class="r" style="left:0;top:281px;width:700px;height:1px;background:#ddd"></div><div class="t" style="left:10px;top:256.95px;font-size:14px;color:#484848">131</div><div class="t" style="left:170px;top:256.95px;font-size:14px;color:#484848">131</div><div class="t" style="left:330px;top:256.95px;font-size:14px;color:#484848">109</div><div class="t" style="left:490px;top:256.95px;font-size:14px;color:#484848">Permanent</div><div class="t" style="left:650px;top:256.95px;font-size:14px;color:#484848">OSM</div><div class="r" style="left:0;top:316px;width:700px;height:1px;background:#ddd"></div><div class="t" style="left:10px;top:291.95px;font-size:14px;color:#484848">133</div><div class="t" style="left:170px;top:291.95px;font-size:14px;color:#484848">133</div><div class="t" style="left:330px;top:291.95px;font-size:14px;color:#484848">109</div><div class="t" style="left:490px;top:291.95px;font-size:14px;color:#484848">Permanent</div><div class="t" style="left:650px;top:291.95px;font-size:14px;color:#484848">OSM</div><div class="r" style="left:0;top:351px;width:700px;height:1px;background:#ddd"></div><div class="t" style="left:10px;top:326.95px;font-size:14px;color:#484848">138</div><div class="t" style="left:170px;top:326.95px;font-size:14px;color:#484848">138</div><div class="t" style="left:330px;top:326.95px;font-size:14px;color:#484848">109</div><div class="t" style="left:490px;top:326.95px;font-size:14px;color:#484848">Permanent</div><div class="t" style="left:650px;top:326.95px;font-size:14px;color:#484848">OSM</div><div class="r" style="left:0;top:386px;width:700px;height:1px;background:#ddd"></div><div class="t" style="left:10px;top:361.95px;font-size:14px;color:#484848">140</div><div class="t" style="left:170px;top:361.95px;font-size:14px;color:#484848">140</div><div class="t" style="left:330px;top:361.95px;font-size:14px;color:#484848">109</div><div class="t" style="left:490px;top:361.95px;font-size:14px;color:#484848">Permanent</div><div class="t" style="left:650px;top:361.95px;font-size:14px;color:#484848">OSM</div><div class="r" style="left:0;top:421px;width:700px;height:1px;background:#ddd"></div><div class="t" style="left:10px;top:396.95px;font-size:14px;color:#484848">141</div><div class="t" style="left:170px;top:396.95px;font-size:14px;color:#484848">141</div><div class="t" style="left:330px;top:396.95px;font-size:14px;color:#484848">109</div><div class="t" style="left:490px;top:396.95px;font-size:14px;color:#484848">Permanent</div><div class="t" style="left:650px;top:396.95px;font-size:14px;color:#484848">OSM</div><div class="r" style="left:0;top:456px;width:700px;height:1px;background:#ddd"></div><div class="t" style="left:10px;top:431.95px;font-size:14px;color:#484848">142</div><div class="t" style="left:170px;top:431.95px;font-size:14px;color:#484848">142</div><div class="t" style="left:330px;top:431.95px;font-size:14px;color:#484848">109</div><div class="t" style="left:490px;top:431.95px;font-size:14px;color:#484848">Permanent</div><div class="t" style="left:650px;top:431.95px;font-size:14px;color:#484848">OSM</div><div class="r" style="left:0;top:491px;width:700px;height:1px;background:#ddd"></div><div class="t" style="left:10px;top:466.95px;font-size:14px;color:#484848">143</div><div class="t" style="left:170px;top:466.95px;font-size:14px;color:#484848">143</div><div class="t" style="left:330px;top:466.95px;font-size:14px;color:#484848">109</div><div class="t" style="left:490px;top:466.95px;font-size:14px;color:#484848">Permanent</div><div class="t" style="left:650px;top:466.95px;font-size:14px;color:#484848">OSM</div><div class="r" style="left:0;top:526px;width:700px;height:1px;background:#ddd"></div><div class="t" style="left:10px;top:501.95px;font-size:14px;color:#484848">144</div><div class="t" style="left:170px;top:501.95px;font-size:14px;color:#484848">144</div><div class="t" style="left:330px;top:501.95px;font-size:14px;color:#484848">142</div><div class="t" style="left:490px;top:501.95px;font-size:14px;color:#484848">Permanent</div><div class="t" style="left:650px;top:501.95px;font-size:14px;color:#484848">OSM</div><div class="r" style="left:0;top:561px;width:700px;height:1px;background:#ddd"></div><div class="t" style="left:10px;top:536.95px;font-size:14px;color:#484848">145</div><div class="t" style="left:170px;top:536.95px;font-size:14px;color:#484848">145</div><div class="t" style="left:330px;top:536.95px;font-size:14px;color:#484848">109</div><div class="t" style="left:490px;top:536.95px;font-size:14px;color:#484848">Permanent</div><div class="t" style="left:650px;top:536.95px;font-size:14px;color:#484848">OSM</div><div class="r" style="left:0;top:596px;width:700px;height:1px;background:#ddd"></div><div class="t" style="left:10px;top:571.95px;font-size:14px;color:#484848">146</div><div class="t" style="left:170px;top:571.95px;font-size:14px;color:#484848">146</div><div class="t" style="left:330px;top:571.95px;font-size:14px;color:#484848">109</div><div class="t" style="left:490px;top:571.95px;font-size:14px;color:#484848">Permanent</div><div class="t" style="left:650px;top:571.95px;font-size:14px;color:#484848">OSM</div><div class="r" style="left:0;top:631px;width:700px;height:1px;background:#ddd"></div><div class="t" style="left:10px;top:606.95px;font-size:14px;color:#484848">149</div><div class="t" style="left:170px;top:606.95px;font-size:14px;color:#484848">149</div><div class="t" style="left:330px;top:606.95px;font-size:14px;color:#484848">109</div><div class="t" style="left:490px;top:606.95px;font-size:14px;color:#484848">Permanent</div><div class="t" style="left:650px;top:606.95px;font-size:14px;color:#484848">OSM</div><div class="r" style="left:668px;top:2px;width:17px;height:34px;background:#f0f0f0"></div><div class="up" style="left:672.5px;top:9px"></div><div class="r" style="left:671px;top:19px;width:11px;height:1px;background:#d8d8d8"></div><div class="dn" style="left:672.5px;top:25px"></div><div class="r" style="left:685px;top:0;width:20px;height:36px;background:#f8f8f8"></div><div class="r" style="left:685px;top:37px;width:15px;height:586px;background:#f1f1f1"></div><div class="r" style="left:687px;top:54px;width:13px;height:17px;background:#c1c1c1"></div><div class="up" style="left:688.5px;top:44px"></div><div class="dn" style="left:688.5px;top:612px"></div><div class="r" style="left:0;top:623px;width:700px;height:17px;background:#f1f1f1"></div><div class="r" style="left:19px;top:625px;width:396px;height:13px;background:#c1c1c1"></div><div class="lt" style="left:8px;top:627.5px"></div><div class="rt" style="left:675px;top:627.5px"></div><div class="r" style="left:685px;top:623px;width:15px;height:17px;background:#dcdcdc"></div></div></div>
<div class="r" style="left:1226px;top:54px;width:16px;height:700px;background:#f1f1f1"></div>
<div class="r" style="left:1228px;top:71px;width:13px;height:623px;background:#c1c1c1"></div>
<div class="up" style="left:1230.5px;top:61px"></div>
<div class="dn" style="left:1230.5px;top:743px"></div>
<div class="r" style="left:1013px;top:769px;width:100px;height:50px;background:#00a6e8;border-radius:10px"></div>
<div class="t" style="left:1047.4px;top:786.90px;font-size:13px;color:#fff;font-weight:bold;letter-spacing:-.2px">Done</div>
<div class="r" style="left:1128px;top:769px;width:100px;height:50px;background:#cccccc;border:1px solid #999;border-radius:10px"></div>
<div class="t" style="left:1161.2px;top:786.90px;font-size:13px;color:#666;font-weight:normal;">Apply</div>
</div></div></body></html>
